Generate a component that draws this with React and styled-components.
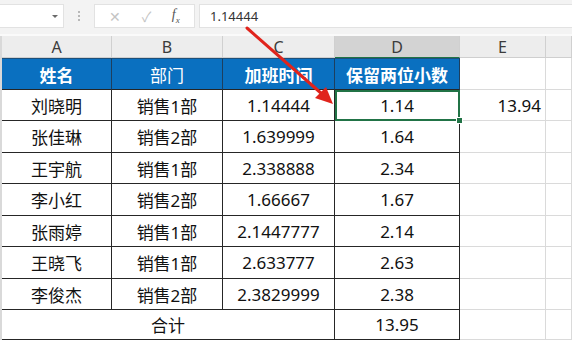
import React from 'react';
import styled, { createGlobalStyle } from 'styled-components';

const GlobalStyle = createGlobalStyle`
  html, body {
    margin: 0;
    padding: 0;
    background: #ffffff;
  }
  body {
    font-family: "Noto Sans", "Noto Sans CJK SC", sans-serif;
    overflow: hidden;
  }
`;

const rows = [
  ['刘晓明', '销售1部', '1.14444', '1.14'],
  ['张佳琳', '销售2部', '1.639999', '1.64'],
  ['王宇航', '销售1部', '2.338888', '2.34'],
  ['李小红', '销售2部', '1.66667', '1.67'],
  ['张雨婷', '销售1部', '2.1447777', '2.14'],
  ['王晓飞', '销售1部', '2.633777', '2.63'],
  ['李俊杰', '销售2部', '2.3829999', '2.38'],
];

const rowHeights = [31, 32, 31, 32, 31, 32, 31];

const Page = styled.div`
  position: relative;
  width: 572px;
  height: 340px;
  overflow: hidden;
  background: #fff;
`;

const FormulaBar = styled.div`
  display: flex;
  align-items: flex-start;
  height: 36px;
  padding-top: 4px;
  box-sizing: border-box;
  background: #f3f3f3;
  border-bottom: 2px solid #fafafa;
`;

const NameBox = styled.div`
  width: 64px;
  height: 24px;
  background: #fff;
  border: 1px solid #e2e2e2;
  border-left: none;
  box-sizing: border-box;
  display: flex;
  align-items: center;
  justify-content: flex-end;
  padding-right: 5px;
`;

const Caret = styled.span`
  width: 0;
  height: 0;
  border-left: 3px solid transparent;
  border-right: 3px solid transparent;
  border-top: 3px solid #6a6a6a;
`;

const Grip = styled.div`
  width: 30px;
  height: 24px;
  display: flex;
  flex-direction: column;
  align-items: center;
  justify-content: center;
  gap: 2px;
  span {
    width: 2px;
    height: 2px;
    background: #b8b8b8;
  }
`;

const EditBox = styled.div`
  width: 101px;
  height: 24px;
  background: #fff;
  border: 1px solid #e2e2e2;
  box-sizing: border-box;
  display: flex;
  align-items: center;
  justify-content: space-around;
  padding: 0 4px;
  color: #c4c4c4;
  font-size: 14px;
`;

const Fx = styled.span`
  font-family: "Liberation Serif", serif;
  font-style: italic;
  color: #555;
  font-size: 14px;
  sub {
    font-size: 9px;
  }
`;

const FormulaInput = styled.div`
  flex: 1;
  margin-left: 4px;
  height: 24px;
  background: #fff;
  border: 1px solid #e2e2e2;
  border-right: none;
  box-sizing: border-box;
  display: flex;
  align-items: center;
  padding-left: 10px;
  font-size: 13px;
  color: #333;
`;

const Sheet = styled.div`
  display: grid;
  grid-template-columns: 110px 111px 112px 125px 86px 1fr;
  border-left: 2px solid #d9d9d9;
`;

const ColHead = styled.div`
  height: 22px;
  background: ${p => (p.$active ? '#d3d3d3' : '#ededed')};
  border-right: 1px solid #d0d0d0;
  border-bottom: 1px solid ${p => (p.$active ? '#217346' : '#cfcfcf')};
  box-sizing: border-box;
  display: flex;
  align-items: center;
  justify-content: center;
  font-size: 16px;
  color: #3c3c3c;
  line-height: 1;
`;

const Cell = styled.div`
  position: relative;
  height: ${p => p.$h || 31}px;
  box-sizing: border-box;
  display: flex;
  align-items: center;
  justify-content: ${p => p.$align || 'center'};
  padding: 0 4px;
  font-size: 17px;
  color: #111;
  white-space: nowrap;
  background: #fff;
  border-right: 1px solid #262626;
  border-bottom: 1px solid #262626;
  grid-column: ${p => (p.$span ? `span ${p.$span}` : 'auto')};
`;

const HeadCell = styled(Cell)`
  background: #0a70c0;
  color: #fff;
  font-weight: ${p => (p.$light ? 400 : 700)};
  border-top: 1px solid #1d4f7a;
  border-right-color: #1d3f5e;
`;

const BlankCell = styled(Cell)`
  border-right: 1px solid #dadada;
  border-bottom: 1px solid #dadada;
  padding-right: 4px;
`;

const SelectedCell = styled(Cell)`
  outline: 2px solid #217346;
  outline-offset: -2px;
  &::after {
    content: '';
    position: absolute;
    right: -4px;
    bottom: -4px;
    width: 5px;
    height: 5px;
    background: #217346;
    border: 1px solid #fff;
    z-index: 2;
  }
`;

const Arrow = styled.svg`
  position: absolute;
  left: 0;
  top: 0;
  pointer-events: none;
`;

const App = () => (
  <Page>
    <GlobalStyle />
    <FormulaBar>
      <NameBox>
        <Caret />
      </NameBox>
      <Grip>
        <span />
        <span />
        <span />
      </Grip>
      <EditBox>
        <span>✕</span>
        <span>✓</span>
        <Fx>
          f<sub>x</sub>
        </Fx>
      </EditBox>
      <FormulaInput>1.14444</FormulaInput>
    </FormulaBar>

    <Sheet>
      {['A', 'B', 'C', 'D', 'E', ''].map(l => (
        <ColHead key={`col-${l}`} $active={l === 'D'}>
          {l}
        </ColHead>
      ))}

      <HeadCell $h={32}>姓名</HeadCell>
      <HeadCell $h={32} $light>
        部门
      </HeadCell>
      <HeadCell $h={32}>加班时间</HeadCell>
      <HeadCell $h={32}>保留两位小数</HeadCell>
      <BlankCell $h={32} />
      <BlankCell $h={32} />

      {rows.map((r, i) => {
        const h = rowHeights[i];
        const D = i === 0 ? SelectedCell : Cell;
        return (
          <React.Fragment key={r[0]}>
            <Cell $h={h}>{r[0]}</Cell>
            <Cell $h={h}>{r[1]}</Cell>
            <Cell $h={h}>{r[2]}</Cell>
            <D $h={h}>{r[3]}</D>
            <BlankCell $h={h} $align={i === 0 ? 'flex-end' : undefined}>
              {i === 0 ? '13.94' : ''}
            </BlankCell>
            <BlankCell $h={h} />
          </React.Fragment>
        );
      })}

      <Cell $h={30} $span={3}>
        合计
      </Cell>
      <Cell $h={30}>13.95</Cell>
      <BlankCell $h={30} />
      <BlankCell $h={30} />
    </Sheet>

    <Arrow width="572" height="340" viewBox="0 0 572 340">
      <line x1="247" y1="28" x2="322" y2="94" stroke="#e0241c" strokeWidth="3" strokeLinecap="round" />
      <polygon points="333,104 315,98 326,87" fill="#e0241c" />
    </Arrow>
  </Page>
);

export default App;
